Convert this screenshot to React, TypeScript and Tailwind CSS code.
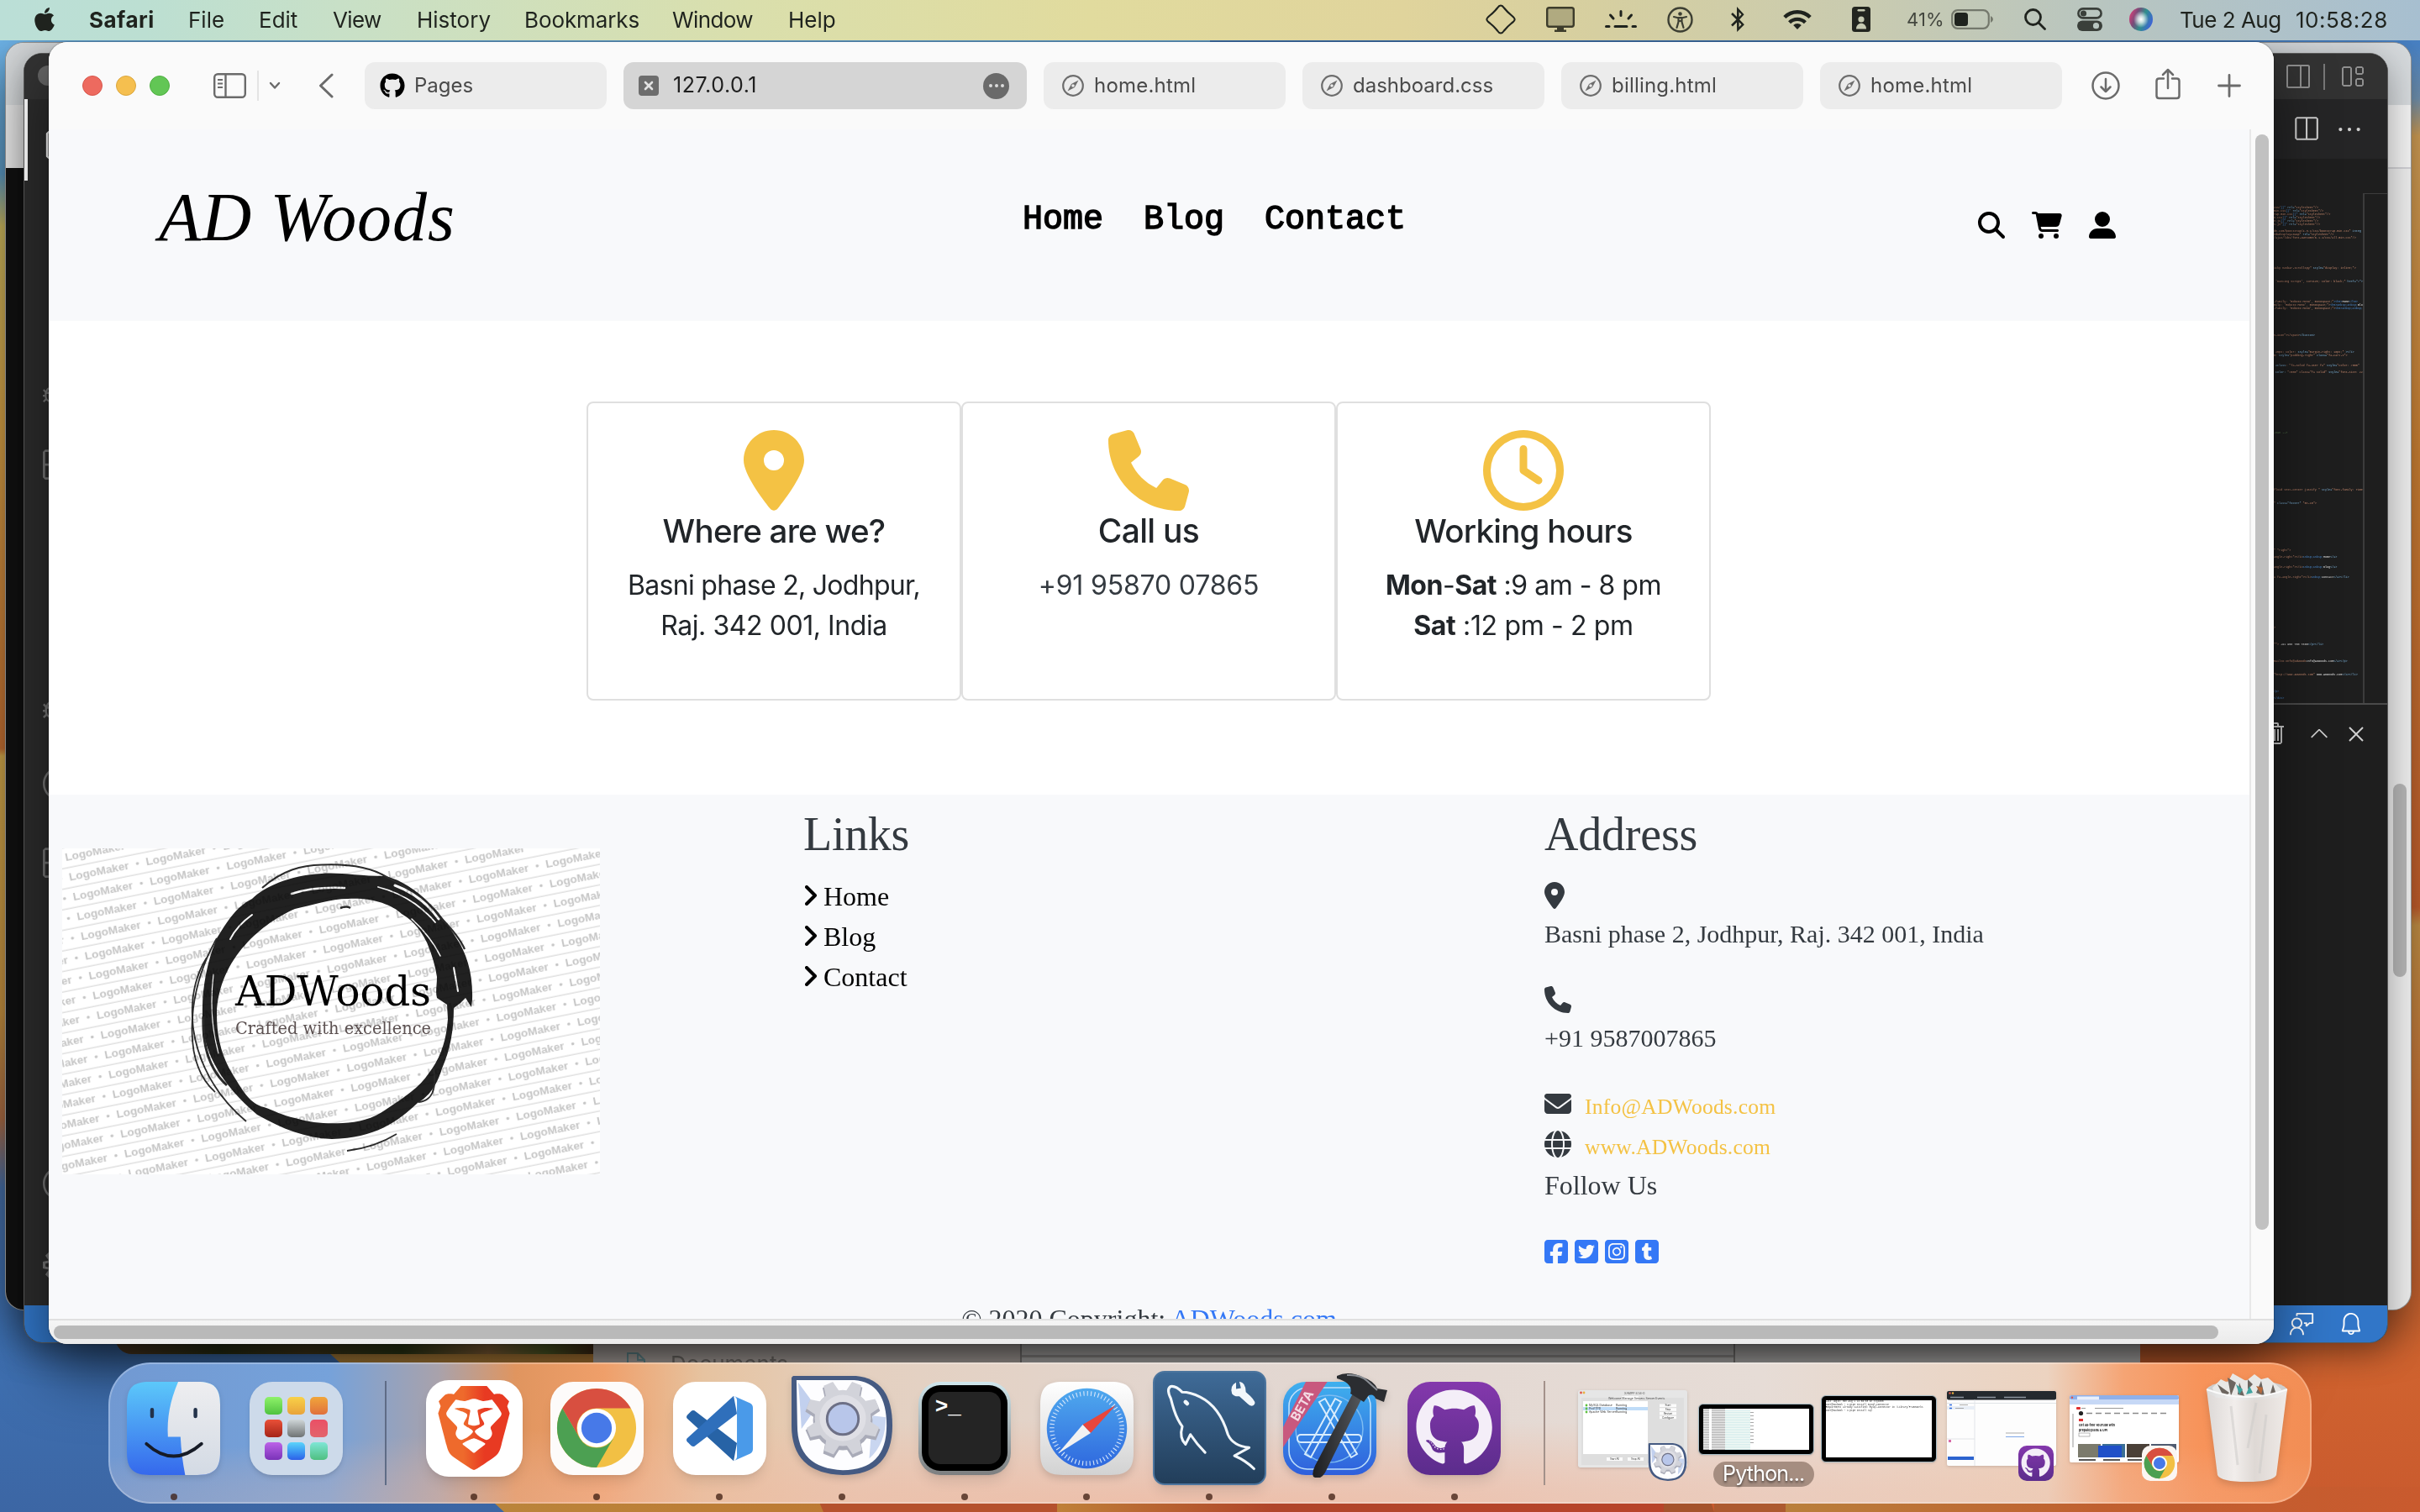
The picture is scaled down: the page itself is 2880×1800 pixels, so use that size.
import type { ReactNode } from "react";
import {
  FaBluetoothB,
  FaEnvelope,
  FaGithub,
  FaGlobe,
  FaCartShopping,
  FaLocationDot,
  FaMagnifyingGlass,
  FaPhone,
  FaRegClock,
  FaSquareFacebook,
  FaSquareInstagram,
  FaSquareTumblr,
  FaSquareTwitter,
  FaUserLarge,
  FaApple,
} from "react-icons/fa6";
import { SiBrave } from "react-icons/si";
import {
  VscBell,
  VscChevronUp,
  VscClose,
  VscAccount,
  VscDebugAlt,
  VscEllipsis,
  VscExtensions,
  VscFeedback,
  VscFiles,
  VscLayout,
  VscSettingsGear,
  VscSplitHorizontal,
  VscTrash,
} from "react-icons/vsc";

/* ---------- Wallpaper ---------- */

function Wallpaper() {
  return (
    <svg className="absolute inset-0 h-full w-full" viewBox="0 0 2880 1800" preserveAspectRatio="none">
      <defs>
        <linearGradient id="wl" x1="0" y1="0" x2="0" y2="1800" gradientUnits="userSpaceOnUse">
          <stop offset="0.03" stopColor="#6fb4e8" />
          <stop offset="0.115" stopColor="#609fcb" />
          <stop offset="0.15" stopColor="#d6c162" />
          <stop offset="0.28" stopColor="#dfa84a" />
          <stop offset="0.495" stopColor="#cd7535" />
          <stop offset="0.5" stopColor="#dbb050" />
          <stop offset="0.67" stopColor="#cf9844" />
          <stop offset="0.74" stopColor="#b07048" />
          <stop offset="0.785" stopColor="#4a74ad" />
          <stop offset="0.88" stopColor="#3f72b4" />
          <stop offset="1" stopColor="#3c66a4" />
        </linearGradient>
        <linearGradient id="wr" x1="0" y1="0" x2="0" y2="1800" gradientUnits="userSpaceOnUse">
          <stop offset="0.03" stopColor="#4a84c8" />
          <stop offset="0.065" stopColor="#7a9dbd" />
          <stop offset="0.09" stopColor="#e0aa5c" />
          <stop offset="0.3" stopColor="#da8a38" />
          <stop offset="0.6" stopColor="#cf6430" />
          <stop offset="0.612" stopColor="#d0994a" />
          <stop offset="0.75" stopColor="#d2753a" />
          <stop offset="0.9" stopColor="#d0632f" />
          <stop offset="1" stopColor="#c95a2e" />
        </linearGradient>
        <linearGradient id="wb1" x1="0" x2="1">
          <stop offset="0" stopColor="#b98a3e" />
          <stop offset="1" stopColor="#bd7a34" />
        </linearGradient>
        <linearGradient id="wb2" x1="0" x2="1">
          <stop offset="0" stopColor="#bf8038" />
          <stop offset="0.35" stopColor="#b0452a" />
          <stop offset="1" stopColor="#b8442a" />
        </linearGradient>
        <linearGradient id="wb3" x1="0" x2="1">
          <stop offset="0" stopColor="#b9803c" />
          <stop offset="0.5" stopColor="#c06030" />
          <stop offset="1" stopColor="#c95a2e" />
        </linearGradient>
      </defs>
      <rect width="1440" height="1800" fill="url(#wl)" />
      <rect x="1440" width="1440" height="1800" fill="url(#wr)" />
      <path d="M380 1600L600 1800H1000V1600Z" fill="url(#wb1)" />
      <path d="M967 1770L980 1800H1270V1770Z" fill="#b5512d" />
      <path d="M1258 1770V1800H1990V1770Z" fill="url(#wb2)" />
      <path d="M1980 1770H2030L2040 1800H1980Z" fill="#a5532c" />
      <path d="M2125 1770L2115 1800H2880V1770Z" fill="url(#wb3)" />
      <rect x="2040" y="1770" width="85" height="30" fill="#ad5a30" />
    </svg>
  );
}

/* ---------- Menu bar ---------- */

const MENUS: [string, string][] = [
  ["File", "w-[84px]"],
  ["Edit", "w-[88px]"],
  ["View", "w-[100px] tracking-[-0.6px]"],
  ["History", "w-[128px]"],
  ["Bookmarks", "w-[176px] tracking-[-0.1px]"],
  ["Window", "w-[138px] tracking-[-0.6px]"],
  ["Help", "w-[90px]"],
];

function MenuBar() {
  return (
    <header className="absolute inset-x-0 top-0 flex h-12 items-center bg-[linear-gradient(90deg,#bbdfd7_0%,#bcdfd2_6%,#c8e0c7_14%,#dadfac_31%,#e1db9e_45%,#e0d49c_58%,#d6cfa0_66%,#c9cbb0_77%,#b8c5c0_87%,#a7bfd0_100%)] pb-[2px] text-[26px] text-[#1f231e]">
      <FaApple className="ml-[39px] mr-[39px] h-[32px] w-[28px]" />
      <span className="w-[118px] font-bold tracking-[0.5px]">Safari</span>
      {MENUS.map(([t, c]) => (
        <span key={t} className={c}>
          {t}
        </span>
      ))}
      <div className="flex-1" />
      <svg className="mr-[36px] h-[36px] w-[36px]" viewBox="0 0 36 36" fill="none" stroke="currentColor" strokeWidth="2.2" strokeLinejoin="round">
        <path d="M18 1.5Q20 1.500 22 4.500Q26 9.500 31 13.500Q35 17 34.500 18Q35 19.500 31 22.500Q26 26.500 22 31.500Q20 34.500 18 34.500Q16 34.500 14 31.500Q10 26.500 5 22.500Q1 19.500 1.500 18Q1 17 5 13.500Q10 9.500 14 4.500Q16 1.500 18 1.500Z" />
      </svg>
      <svg className="mr-[36px] h-[30px] w-[34px]" viewBox="0 0 34 30">
        <rect x="1.200" y="1.200" width="31.600" height="22.600" rx="2.500" fill="#b0aa80" stroke="#3d3c2b" strokeWidth="2.400" />
        <path d="M13 24h8v3.500h3V30H10v-2.500h3Z" fill="#3d3c2b" />
      </svg>
      <svg className="mr-[36px] h-[22px] w-[38px]" viewBox="0 0 38 22" stroke="currentColor" strokeWidth="3" strokeLinecap="round">
        <path d="M19 1.500v5M6.500 6l3.500 4M31.500 6L28 10M1.500 19.500H5M12 19.500h14M33 19.500h3.500" />
      </svg>
      <svg className="mr-[42px] h-[31px] w-[31px]" viewBox="0 0 31 31" fill="none" stroke="#3d3f33">
        <circle cx="15.500" cy="15.500" r="14" strokeWidth="2.400" />
        <circle cx="15.500" cy="8.500" r="2.300" fill="#3d3f33" stroke="none" />
        <path d="M8 12l5 1.200h5L23 12M13.500 13v5L11.500 25M17.500 13v5L19.500 25M13.500 17h4" strokeWidth="2.200" strokeLinecap="round" />
      </svg>
      <FaBluetoothB className="mr-[43px] h-[30px] w-[22px]" />
      <svg className="mr-[48px] h-[26px] w-[34px]" viewBox="0 0 34 26" fill="none" stroke="currentColor" strokeWidth="4.400">
        <path d="M1.800 10.500a21.500 21.500 0 0 1 30.400 0M7.600 16.800a13.300 13.300 0 0 1 18.800 0" />
        <path d="M17 25l-4.800-5a6.800 6.800 0 0 1 9.600 0Z" fill="currentColor" stroke="none" />
      </svg>
      <svg className="mr-[43px] h-[30px] w-[22px]" viewBox="0 0 22 30">
        <rect width="22" height="30" rx="3.500" fill="#22251f" />
        <rect x="6.500" y="3" width="9" height="2.400" rx="1.200" fill="#c6cab2" />
        <circle cx="11" cy="15" r="3.600" fill="#c6cab2" />
        <path d="M5 26.500c0-9 12-9 12 0Z" fill="#c6cab2" />
      </svg>
      <span className="w-[53px] text-[22px] tracking-[0.100px] text-[#44473f]">41%</span>
      <svg className="mr-[37px] h-[24px] w-[50px]" viewBox="0 0 50 24">
        <rect x="1.200" y="1.200" width="43.600" height="21.600" rx="6.500" fill="none" stroke="#74786c" strokeWidth="2.200" />
        <rect x="4" y="4" width="16" height="16" rx="3.500" fill="#1f231e" />
        <path d="M47 8q3 1.500 3 4t-3 4Z" fill="#74786c" />
      </svg>
      <svg className="mr-[37px] h-[26px] w-[26px]" viewBox="0 0 26 26" fill="none" stroke="currentColor" strokeWidth="2.800" strokeLinecap="round">
        <circle cx="10.500" cy="10.500" r="9" />
        <path d="M17.500 17.500l7 7" />
      </svg>
      <svg className="mr-[32px] h-[28px] w-[30px]" viewBox="0 0 30 28" fill="none">
        <rect x="1.400" y="1.400" width="27.200" height="11" rx="5.500" stroke="#3a3f3a" strokeWidth="2.600" />
        <circle cx="7.500" cy="7" r="3.600" fill="#3a3f3a" />
        <rect x="0" y="15.500" width="30" height="12.500" rx="6.200" fill="#3a3f3a" />
        <circle cx="22.500" cy="21.700" r="3.600" fill="#b8c5c0" />
      </svg>
      <svg className="mr-[32px] h-[28px] w-[28px]" viewBox="0 0 28 28">
        <defs>
          <radialGradient id="siriGlow">
            <stop offset="0" stopColor="#fff" />
            <stop offset="0.4" stopColor="#fff" stopOpacity="0.700" />
            <stop offset="1" stopColor="#fff" stopOpacity="0" />
          </radialGradient>
          <linearGradient id="siri" x1="0" x2="1" y1="0.200" y2="0.600">
            <stop offset="0" stopColor="#e0407a" />
            <stop offset="0.300" stopColor="#7a4a78" />
            <stop offset="0.600" stopColor="#2f8f8c" />
            <stop offset="1" stopColor="#3f62d8" />
          </linearGradient>
        </defs>
        <circle cx="14" cy="14" r="14" fill="url(#siri)" />
        <ellipse cx="14" cy="14" rx="9" ry="10" fill="url(#siriGlow)" />
      </svg>
      <span className="w-[138px] tracking-[-0.500px]">Tue 2 Aug</span>
      <span className="w-[148px] tracking-[0.500px]">10:58:28</span>
    </header>
  );
}

/* ---------- Background windows ---------- */

function BackWindow() {
  return (
    <div className="absolute left-[6px] top-[50px] flex h-[1510px] w-[2864px] overflow-hidden rounded-[22px] border border-[#555]/60 bg-[#ebebeb] shadow-[0_24px_60px_rgba(0,0,0,0.450)]">
      <div className="w-[1400px]">
        <div className="h-[74px] bg-[#d3d6d8]" />
        <div className="h-[75px] bg-[#e3e3e3]" />
        <div className="h-full bg-[#111]" />
      </div>
      <div className="flex-1">
        <div className="h-[74px] bg-[#d5d9dc]" />
        <div className="h-[74px] bg-[#f1f1f1]" />
        <div className="h-[2px] bg-[#cfcfd3]" />
        <div className="flex justify-end pr-[5px] pt-[732px]">
          <div className="h-[230px] w-4 rounded-full bg-[#b4b4b4]" />
        </div>
      </div>
    </div>
  );
}

type Seg = [string, string];
const O = "text-[#c98a6e]";
const B = "text-[#7fb6de]";
const D = "text-[#4a8ad0]";
const W = "text-[#e0e0e0]";
const G = "text-[#5f8a52]";

const CODE: Record<number, Seg[]> = {
  0: [["css/", O], ["}}\"", D], [" rel=", B], ["\"stylesheet\"/>", O]],
  1: [["min.css", O], ["}}\"", D], [" rel=", B], ["\"stylesheet\"/>", O]],
  2: [["rap.min.css", O], ["}}\"", D], [" rel=", B], ["\"stylesheet\"/>", O]],
  3: [["n.css", O], ["}}\"", D], [" rel=", B], ["\"stylesheet\"/>", O]],
  4: [["e.js", O], ["}}\"", D], [" rel=", B], ["\"stylesheet\"/>", O]],
  5: [["s.js\"", O], ["}}\"", D], [" rel=", B], ["\"stylesheet\"/>", O]],
  7: [["dn.com/bootstrap/4.3.1/css/bootstrap.min.css\" ", O], ["integ", B]],
  8: [["ed&display=swap\" ", O], ["rel=", B], ["\"stylesheet\"/>", O]],
  9: [["/ajax/libs/font-awesome/6.1.1/css/all.min.css\"/>", O]],
  18: [["icky navbar-scrollspy\" ", O], ["style=", B], ["\"display: inline;\">", O]],
  22: [[" 'Dancing Script', cursive; color: black;\" ", O], ["href=\"#\">", B]],
  28: [["-family: 'Roboto Mono', monospace;\"", O], ["><h5>", D], ["Home", W], ["</h5>", D]],
  29: [["mily: 'Roboto Mono', monospace;\">", O], ["<h5>&nbsp;&nbsp;", D], ["Blog", W]],
  30: [["-family: 'Roboto Mono', monospace;\">", O], ["<h5>&nbsp;&nbsp;", D], ["C", W]],
  38: [["n-icon\"></span>", O], ["</button>", B]],
  43: [[" 25px; color: ", O], ["style=", B], ["\"margin-right: 18px;\" ", O], ["></i>", B]],
  44: [["m: ", O], ["style=", B], ["\"padding-right\" ", O], ["class=", B], ["\"fa-cart-x\">", O]],
  47: [[" 2", B], ["class", B], [": ", O], ["\"fa-solid fa-user fa\" ", O], ["style=", B], ["\"color: #000\"", O]],
  49: [[" color:", B], [" \"#000\" class=\"fa solid\" ", O], ["style=", B], ["\"font-size: 22\"", O]],
  67: [["-nav -->", G]],
  84: [["fluid text-center justify \" ", O], ["style=", B], ["\"font-family: Times\"", O]],
  88: [["\" ", O], ["class=\"footer\"", B], [" \"mt-10\">", O]],
  102: [["\" \"right\">", O]],
  104: [["angle-right\"></i>", O], ["&nbsp;&nbsp;", D], ["Home", W], ["</a>", B]],
  107: [["angle-right\"></i>", O], ["&nbsp;&nbsp;", D], ["Blog", W], ["</a>", B]],
  110: [["a fa-angle-right\"></i>", O], ["&nbsp;", D], ["Contact", W], ["</a></li>", B]],
  125: [[">", O]],
  130: [["\"\"> ", O], ["+91 958 700 7865", W], ["</p></li>", B]],
  135: [["mailto:Info@adwoods", O], ["Info@ADWoods.com", W], ["</a></p>", B]],
  139: [["\"http://www.ADWoods.com\" ", O], ["www.ADWoods.com", W], ["</a></li>", B]],
  144: [["/p>", D]],
  146: [["</div>", D]],
};

function Minimap() {
  return (
    <pre className="h-[607px] w-[156px] overflow-hidden border-r-2 border-[#3c3c3c] pl-[48px] pt-[15px] font-['Liberation_Mono'] text-[3.400px] leading-[4px]">
      {Array.from({ length: 148 }, (_, i) => (
        <div key={i} className="h-1">
          {(CODE[i] ?? []).map(([t, c], j) => (
            <span key={j} className={c}>
              {t}
            </span>
          ))}
        </div>
      ))}
    </pre>
  );
}

function CodeWindow() {
  return (
    <div className="absolute left-[28px] top-[63px] flex h-[1536px] w-[2814px] flex-col overflow-hidden rounded-[22px] border border-[#5a5a5a] bg-[#1e1e1e] shadow-[0_10px_40px_rgba(0,0,0,0.350)]">
      <div className="flex min-h-0 flex-1">
        <div className="flex w-24 flex-col bg-[#2c2c2c] text-[#757575]">
          <div className="h-[54px] bg-[#333] pl-[16px] pt-[14px]">
            <div className="h-6 w-6 rounded-full bg-[#666]" />
          </div>
          <div className="flex h-[97px] items-center border-l-4 border-white pl-[20px] text-white">
            <VscFiles className="size-[44px]" />
          </div>
          <div className="flex flex-col pl-[22px] pt-[228px]">
            <VscDebugAlt className="size-[36px]" />
            <VscExtensions className="mt-[48px] size-[44px]" />
            <VscDebugAlt className="mt-[244px] size-[40px]" />
            <VscAccount className="mt-[58px] size-[40px]" />
            <VscExtensions className="mt-[48px] size-[44px]" />
            <VscAccount className="mt-[344px] size-[40px]" />
            <VscSettingsGear className="mt-[57px] size-[40px]" />
          </div>
        </div>
        <div className="flex flex-1 flex-col">
          <div className="flex h-[54px] items-center justify-end gap-4 bg-[#323232] pr-[26px] text-[#8f8f8f]">
            <svg className="h-[28px] w-[28px]" viewBox="0 0 28 28" fill="none" stroke="currentColor" strokeWidth="2">
              <rect x="1" y="1" width="26" height="26" rx="1.500" />
              <path d="M17 1v26" />
            </svg>
            <div className="h-[31px] w-[2px] bg-[#777]" />
            <VscLayout className="size-[32px]" />
          </div>
          <div className="flex h-[71px] items-center justify-end gap-[18px] bg-[#252526] pr-[28px] text-[#cfcfcf]">
            <VscSplitHorizontal className="size-[34px]" />
            <VscEllipsis className="size-[34px]" />
          </div>
          <div className="flex h-[650px] items-end justify-end border-b-2 border-[#4a4a4a]">
            <Minimap />
            <div className="h-[607px] w-[27px] border-t border-[#3c3c3c]" />
          </div>
          <div className="flex items-center justify-end gap-[12px] pr-[21px] pt-[19px] text-[#cfcfcf]">
            <VscTrash className="mr-[8px] size-[32px]" />
            <VscChevronUp className="size-[32px]" />
            <VscClose className="size-[32px]" />
          </div>
        </div>
      </div>
      <div className="flex h-[44px] items-center justify-end gap-[28px] bg-[#3176c8] pr-[28px] text-white">
        <VscFeedback className="size-[30px]" />
        <VscBell className="size-[30px]" />
      </div>
    </div>
  );
}

function LowerWindows() {
  return (
    <>
      <div className="absolute left-[137px] top-[1400px] h-[212px] w-[569px] rounded-bl-[20px] bg-[linear-gradient(90deg,#5a4028,#2f3618_22%,#4c4020_40%,#34421a_60%,#9a7040_78%,#5c6a2c_90%,#4a3018)]" />
      <div className="absolute left-[706px] top-[1400px] flex h-[380px] w-[1841px] bg-[#c2c0be] pt-[200px] text-[26px] text-[#7d7873]">
        <div className="flex w-[510px] items-start gap-[30px] border-r-2 border-[#868381] bg-[#beb6b1] pl-[40px] pt-[10px]">
          <svg className="h-[30px] w-[22px]" viewBox="0 0 22 30" fill="none" stroke="#6f9aa0" strokeWidth="2">
            <path d="M1 1h12l8 8v20H1ZM13 1v8h8" />
          </svg>
          <span className="leading-[28px]">Documents</span>
        </div>
        <div className="w-[849px] border-r-2 border-[#868381] pt-[13px]">
          <div className="h-[3px] bg-[#9c9a98]" />
        </div>
      </div>
    </>
  );
}

/* ---------- Browser window ---------- */

function Compass() {
  return (
    <svg className="size-[26px]" viewBox="0 0 26 26" fill="none">
      <circle cx="13" cy="13" r="11.800" stroke="#6d6d6d" strokeWidth="2.200" />
      <path d="M19.500 6.500L15 15L6.500 19.500L11 11Z" fill="#6d6d6d" />
      <circle cx="13" cy="13" r="1.800" fill="#ececec" />
    </svg>
  );
}

function Tab({ title, className }: { title: string; className: string }) {
  return (
    <div className="flex h-14 w-[288px] items-center gap-3 rounded-xl bg-[#ececec] pl-[22px] text-[#4a4a4a]">
      <Compass />
      <span className={className}>{title}</span>
    </div>
  );
}

function Toolbar() {
  return (
    <div className="flex h-[104px] shrink-0 items-center bg-[#fafafa] text-[24px] text-[#6b6b6b]">
      <div className="ml-[40px] flex gap-4">
        <div className="size-6 rounded-full border border-[#d8564b] bg-[#ed6a5f]" />
        <div className="size-6 rounded-full border border-[#dba63c] bg-[#f5bf4f]" />
        <div className="size-6 rounded-full border border-[#4faf42] bg-[#62c655]" />
      </div>
      <svg className="ml-[52px] h-[30px] w-[39px]" viewBox="0 0 39 30" fill="none" stroke="currentColor" strokeWidth="2.400">
        <rect x="1.200" y="1.200" width="36.600" height="27.600" rx="4" />
        <path d="M14.500 1v28" />
        <path d="M5 8h6M5 12.500h6M5 17h6" strokeWidth="2" />
      </svg>
      <div className="ml-[13px] h-9 w-[2px] bg-[#e4e4e4]" />
      <svg className="ml-[11px] h-[10px] w-[16px]" viewBox="0 0 16 10" fill="none" stroke="currentColor" strokeWidth="2.400" strokeLinecap="round" strokeLinejoin="round">
        <path d="M3 2l5 5.500l5-5.500" />
      </svg>
      <svg className="ml-[44px] h-[30px] w-[18px]" viewBox="0 0 18 30" fill="none" stroke="currentColor" strokeWidth="3" strokeLinecap="round" strokeLinejoin="round">
        <path d="M16 2L2.500 15L16 28" />
      </svg>
      <div className="ml-[37px] flex gap-5">
        <div className="flex h-14 w-[288px] items-center gap-[11px] rounded-xl bg-[#ececec] pl-[18px] text-[#4a4a4a]">
          <FaGithub className="size-[30px] text-black" />
          <span>Pages</span>
        </div>
        <div className="flex h-14 w-[480px] items-center rounded-xl bg-[#d5d5d5] pl-[18px] pr-[21px] text-[#1f1f1f]">
          <div className="mr-[17px] flex size-6 items-center justify-center rounded-[4px] bg-[#6d6d6d]">
            <svg className="size-[12px]" viewBox="0 0 12 12" stroke="#e2e2e2" strokeWidth="2.600" strokeLinecap="round">
              <path d="M2 2l8 8M10 2l-8 8" />
            </svg>
          </div>
          <span className="flex-1 text-[25px] tracking-[0.550px]">127.0.0.1</span>
          <div className="flex size-[31px] items-center justify-center gap-[3px] rounded-full bg-[#6a6a6a]">
            <span className="size-[4px] rounded-full bg-[#dcdcdc]" />
            <span className="size-[4px] rounded-full bg-[#dcdcdc]" />
            <span className="size-[4px] rounded-full bg-[#dcdcdc]" />
          </div>
        </div>
        <Tab title="home.html" className="tracking-[0.200px]" />
        <Tab title="dashboard.css" className="tracking-[0px]" />
        <Tab title="billing.html" className="tracking-[0.200px]" />
        <Tab title="home.html" className="tracking-[0.200px]" />
      </div>
      <svg className="ml-[35px] size-[34px]" viewBox="0 0 34 34" fill="none" stroke="currentColor" strokeWidth="2.500" strokeLinecap="round" strokeLinejoin="round">
        <circle cx="17" cy="17" r="15.500" />
        <path d="M17 9v15M11.500 18.500L17 24l5.500-5.500" />
      </svg>
      <svg className="-mt-[5px] ml-[42px] h-[38px] w-[30px]" viewBox="0 0 30 38" fill="none" stroke="currentColor" strokeWidth="2.500" strokeLinecap="round" strokeLinejoin="round">
        <path d="M10 12.500H4.500Q1.500 12.500 1.500 15.500V33Q1.500 36 4.500 36H25.500Q28.500 36 28.500 33V15.500Q28.500 12.500 25.500 12.500H20M15 24V2M9 8L15 2L21 8" />
      </svg>
      <svg className="ml-[44px] size-[28px]" viewBox="0 0 28 28" stroke="currentColor" strokeWidth="2.800" strokeLinecap="round">
        <path d="M14 1.500v25M1.500 14h25" />
      </svg>
    </div>
  );
}

function SiteHeader() {
  return (
    <div className="flex h-[228px] shrink-0 items-start bg-[#f8f9fb] pl-[131px] text-black">
      <div className="mt-[60px] w-[1028px] font-['Liberation_Serif'] text-[82px] italic leading-[90px] tracking-[0.900px]">AD Woods</div>
      <nav className="mt-[84px] flex w-[1137px] gap-12 font-['Liberation_Mono'] text-[40px] leading-[48px] [-webkit-text-stroke:1.500px_black]">
        <span>Home</span>
        <span>Blog</span>
        <span>Contact</span>
      </nav>
      <div className="mt-[98px] flex gap-8">
        <FaMagnifyingGlass className="size-8" />
        <FaCartShopping className="h-8 w-9" />
        <FaUserLarge className="size-8" />
      </div>
    </div>
  );
}

function InfoCard({ icon, title, titleClass, children }: { icon: ReactNode; title: string; titleClass: string; children: ReactNode }) {
  return (
    <div className="flex h-[356px] w-[446px] flex-col items-center rounded-lg border-2 border-[#dfdfdf] bg-white pt-8 text-[#212529]">
      <div className="h-24 pr-px text-[96px] text-[#f4c244]">{icon}</div>
      <h5 className={titleClass}>{title}</h5>
      <div className="mt-[17px] whitespace-pre text-center text-[32px] leading-[48px]">{children}</div>
    </div>
  );
}

function Brand() {
  return (
    <svg className="mt-[51px] h-[388px] w-[640px] bg-white" viewBox="0 0 640 388">
      <defs>
        <pattern id="wm" width="93.200" height="24" patternUnits="userSpaceOnUse" patternTransform="translate(5.700 22) rotate(-11.300)">
          <text x="0" y="17" fontFamily="Liberation Sans" fontWeight="700" fontSize="13.600" fill="#c6c6c6">
            LogoMaker
          </text>
          <circle cx="83" cy="12.500" r="1.800" fill="#c6c6c6" />
          <path d="M0 1.200H93.200" stroke="#e0e0e0" strokeWidth="1.600" />
        </pattern>
      </defs>
      <g fill="#212121">
        <path
          fillRule="evenodd"
          d="M309 30C330 28 350 33 385 33C420 42 450 75 468 105C482 125 489 150 488 180L487 189L480 178L474 184L466 190C466 215 462 240 452 262C446 282 436 296 423 303C400 325 372 345 321 346C290 345 262 334 232 317C190 282 165 240 167 197C166 165 174 130 184 107C196 88 206 70 226 60C240 46 270 32 309 30ZM340 60C320 60 296 68 277 72C240 88 186 130 184 197C184 225 190 250 206 274C216 290 224 304 240 308C252 312 262 318 277 321C297 327 315 328 334 327C352 326 370 322 385 311C406 297 426 284 436 268C450 250 457 230 459 203L458 186L446 178C444 170 446 164 446 153C444 140 440 126 434 112C424 92 414 84 404 78C392 66 366 58 340 60Z"
        />
      </g>
      <g fill="none" stroke="#2c2c2c" strokeWidth="1.800">
        <path d="M238 47C262 26 285 20 309 19.500C345 18 370 24 386 34C415 48 440 66 450 82C466 98 474 108 479 120" strokeWidth="2.200" />
        <path d="M184 107Q162 145 156 190Q148 260 182 290" />
        <path d="M172 130Q150 165 156 215Q166 280 219 325" />
        <path d="M168 200Q166 255 196 282" strokeWidth="3" />
        <path d="M339 360Q372 356 398 340" />
        <path d="M331 71q8-3 12 0" strokeWidth="2.500" />
        <path d="M424 302Q448 300 442 262" />
      </g>
      <g fill="none" stroke="#fafafa" strokeLinecap="round">
        <path d="M273 54Q300 45 336 47" strokeWidth="2.500" />
        <path d="M376 46Q400 52 420 66Q436 78 444 88" strokeWidth="1.800" />
        <path d="M396 44Q428 56 448 84" strokeWidth="3" />
        <path d="M416 84Q438 104 450 128" strokeWidth="1.500" />
        <path d="M200 108Q208 92 226 79" strokeWidth="2" />
        <path d="M466 142L471 170" strokeWidth="2" />
        <path d="M180 150Q174 200 186 244" strokeWidth="1.200" />
      </g>
      <rect width="640" height="388" fill="url(#wm)" className="mix-blend-multiply" />
      <text x="206" y="187" fontFamily="DejaVu Serif" fontSize="49" textLength="233" lengthAdjust="spacingAndGlyphs" fill="#000">
        ADWoods
      </text>
      <text x="206" y="221" fontFamily="DejaVu Serif" fontSize="21" textLength="233" lengthAdjust="spacingAndGlyphs" fill="#5c5151">
        Crafted with excellence
      </text>
    </svg>
  );
}

function Footer() {
  return (
    <div className="relative h-[624px] shrink-0 overflow-hidden bg-[#f8f9fb] font-['Liberation_Serif'] text-[#343a40]">
      <div className="flex h-[600px] items-start pl-4 pt-[13px]">
        <div className="w-[882px]">
          <Brand />
        </div>
        <div className="w-[882px]">
          <h3 className="text-[56px] leading-[68px] tracking-[-0.300px]">Links</h3>
          <ul className="mt-4 text-[32px] leading-[48px] text-black">
            {["Home", "Blog", "Contact"].map((t) => (
              <li key={t} className="flex gap-2 pl-[2px]">
                <svg className="mt-[11px] h-6 w-[14px]" viewBox="0 0 14 24" fill="none" stroke="currentColor" strokeWidth="4" strokeLinecap="round" strokeLinejoin="round">
                  <path d="M2 2L12 12L2 22" />
                </svg>
                {t}
              </li>
            ))}
          </ul>
        </div>
        <div>
          <h3 className="text-[56px] leading-[68px] tracking-[-0.200px]">Address</h3>
          <FaLocationDot className="mt-[23px] h-8 w-6" />
          <p className="mt-[6px] text-[30px] leading-[48px]">Basni phase 2, Jodhpur, Raj. 342 001, India</p>
          <FaPhone className="mt-[38px] size-8" />
          <p className="mt-[6px] text-[30px] leading-[48px]">+91 9587007865</p>
          <div className="mt-[38px] flex h-8 gap-4">
            <FaEnvelope className="size-8" />
            <span className="mt-[4px] text-[25.600px] leading-8 tracking-[0.200px] text-[#f4c244]">Info@ADWoods.com</span>
          </div>
          <div className="mt-4 flex h-8 gap-4">
            <FaGlobe className="size-8" />
            <span className="mt-[4px] text-[25.600px] leading-8 tracking-[0.200px] text-[#f4c244]">www.ADWoods.com</span>
          </div>
          <p className="mt-[9px] text-[32px] leading-[48px]">Follow Us</p>
          <div className="mt-[39px] flex gap-2 text-[#3478f6]">
            <FaSquareFacebook className="h-8 w-7" />
            <FaSquareTwitter className="h-8 w-7" />
            <FaSquareInstagram className="h-8 w-7" />
            <FaSquareTumblr className="h-8 w-7" />
          </div>
        </div>
      </div>
      <p className="text-center text-[32px] leading-[48px]">
        © 2020 Copyright: <a className="text-[#3478f6]">ADWoods.com</a>
      </p>
    </div>
  );
}

function Browser() {
  return (
    <main className="absolute left-[58px] top-[50px] flex h-[1550px] w-[2648px] flex-col overflow-hidden rounded-[22px] bg-[#fafafa] shadow-[0_0_2px_rgba(0,0,0,0.600),0_36px_70px_rgba(0,0,0,0.500)]">
      <Toolbar />
      <div className="flex h-[1416px]">
        <div className="flex w-[2619px] flex-col bg-white">
          <SiteHeader />
          <div className="flex h-[564px] shrink-0 items-start pl-[640px] pt-24">
            <InfoCard icon={<FaLocationDot className="h-24 w-[72px]" />} title="Where are we?" titleClass="text-[38.500px] font-medium leading-[48px] tracking-[-0.750px]">
              <p className="tracking-[-0.700px]">Basni phase 2, Jodhpur,</p>
              <p className="tracking-[-0.430px]">Raj. 342 001, India</p>
            </InfoCard>
            <InfoCard icon={<FaPhone className="size-24" />} title="Call us" titleClass="text-[39px] font-medium leading-[48px] tracking-[-0.700px]">
              <p className="tracking-[-0.180px] text-[#343a40]">+91 95870 07865</p>
            </InfoCard>
            <InfoCard icon={<FaRegClock className="size-24" />} title="Working hours" titleClass="text-[38.500px] font-medium leading-[48px] tracking-[-0.750px]">
              <p className="tracking-[-0.480px]">
                <b>Mon</b>-<b>Sat</b> :9 am - 8 pm
              </p>
              <p className="tracking-[-0.350px]">
                <b>Sat</b> :12 pm - 2 pm
              </p>
            </InfoCard>
          </div>
          <Footer />
        </div>
        <div className="flex w-[29px] justify-center border-l-2 border-[#e8e8e8] pr-[2px] pt-[6px]">
          <div className="h-[1304px] w-4 rounded-full bg-[#c1c1c1]" />
        </div>
      </div>
      <div className="flex-1 border-t-2 border-[#e0e0e0] bg-gradient-to-b from-[#f5f5f5] to-[#ebebeb] pl-[6px] pt-[6px]">
        <div className="h-4 w-[2576px] rounded-full bg-[#b9b9b9]" />
      </div>
    </main>
  );
}

/* ---------- Dock ---------- */

const TILE = "M49 0H151C187 0 200 13 200 49V151C200 187 187 200 151 200H49C13 200 0 187 0 151V49C0 13 13 0 49 0Z";

function Finder() {
  return (
    <svg className="size-[111px] drop-shadow-md" viewBox="0 0 200 200">
      <defs>
        <linearGradient id="fb" x1="0" y1="0" x2="0" y2="1">
          <stop offset="0" stopColor="#5cc8fa" />
          <stop offset="1" stopColor="#3568ec" />
        </linearGradient>
        <linearGradient id="fw" x1="0" y1="0" x2="0" y2="1">
          <stop offset="0" stopColor="#eeeef0" />
          <stop offset="1" stopColor="#d3dae4" />
        </linearGradient>
      </defs>
      <path d={TILE} fill="url(#fb)" />
      <path d="M110 0H151C187 0 200 13 200 49V151C200 187 187 200 151 200H125Q117 160 115 118H88Q84 60 110 0Z" fill="url(#fw)" />
      <path d="M54 60v14M147 60v14" stroke="#23324a" strokeWidth="8" strokeLinecap="round" />
      <path d="M42 133Q100 186 160 133" fill="none" stroke="#161b26" strokeWidth="7" strokeLinecap="round" />
    </svg>
  );
}

const PADS = [
  "bg-gradient-to-b from-[#8ef26a] to-[#4fc23f]",
  "bg-gradient-to-b from-[#f8d148] to-[#e8a33c]",
  "bg-gradient-to-b from-[#f0a53a] to-[#e0703c]",
  "bg-gradient-to-b from-[#ea5038] to-[#a52318]",
  "bg-gradient-to-b from-[#cfd6d8] to-[#6f7374]",
  "bg-gradient-to-b from-[#ea4f66] to-[#e2646c]",
  "bg-gradient-to-b from-[#bc62e8] to-[#7a32b8]",
  "bg-gradient-to-b from-[#5cd4fa] to-[#2f5fe8]",
  "bg-gradient-to-b from-[#7fe6d6] to-[#4fbf80]",
];

function Launchpad() {
  return (
    <div className="grid size-[111px] grid-cols-[21px_21px_21px] place-content-center gap-[6px] rounded-[27px] bg-[#cddaea] shadow-md">
      {PADS.map((c) => (
        <div key={c} className={`size-[21px] rounded-[5px] ${c}`} />
      ))}
    </div>
  );
}

function Brave() {
  return (
    <div className="flex size-[115px] items-center justify-center rounded-[27px] bg-white shadow-lg">
      <svg width="0" height="0" className="absolute">
        <linearGradient id="brv" x1="0" x2="1">
          <stop offset="0.350" stopColor="#ee6a2c" />
          <stop offset="0.650" stopColor="#e83a22" />
        </linearGradient>
      </svg>
      <SiBrave className="h-[104px] w-[100px]" style={{ fill: "url(#brv)" }} />
    </div>
  );
}

function ChromeDisc({ className }: { className: string }) {
  return (
    <svg className={className} viewBox="-50 -50 100 100">
      <circle r="48" fill="#f2c044" />
      <path d="M-41.600-24A48 48 0 0 1 41.600-24H0A24 24 0 0 0-20.800 12Z" fill="#d84f40" />
      <path d="M-41.600-24A48 48 0 0 0 0 48L20.800 12A24 24 0 0 1-20.800 12Z" fill="#4ca052" />
      <circle r="23.500" fill="#fff" />
      <circle r="18.500" fill="#4779e8" />
    </svg>
  );
}

function VsCode() {
  return (
    <div className="flex size-[111px] items-center justify-center rounded-[27px] bg-white shadow-lg">
      <svg className="size-[79px]" viewBox="0 0 100 100">
        <path d="M71 99L76 72L12 23Q9 22 7 24L1 30Q-1 33 1 35Z" fill="#2763a6" />
        <path d="M71 1L76 28L12 77Q9 78 7 76L1 70Q-1 67 1 65Z" fill="#2f6fbb" />
        <path d="M71 1L96 12Q100 14 100 19V81Q100 86 96 88L71 99Q76 97 76 92V8Q76 3 71 1Z" fill="#4a9ae9" />
      </svg>
    </div>
  );
}

function GearTile({ className }: { className: string }) {
  const teeth = [0, 45, 90, 135, 180, 225, 270, 315];
  return (
    <svg className={className} viewBox="0 0 126 124">
      <path d="M4 2H80Q124 6 124 62Q124 122 64 122Q2 120 2 62V4Z" fill="#455a82" />
      <path d="M8 7H78Q117 10 117 62Q117 116 64 116Q9 114 9 62Z" fill="#fdfdff" />
      <path d="M10 10L32 40L14 66Q12 30 10 10Z" fill="#c2d0ee" />
      <path d="M100 50L116 52Q116 84 96 102Z" fill="#c9d6f0" />
      <g fill="#a9abb8" transform="translate(64 56)">
        {teeth.map((a) => (
          <path key={a} d="M-10-30L-7-46H7L10-30Z" transform={`rotate(${a + 22})`} />
        ))}
        <circle r="36" />
      </g>
      <g fill="#d2d3da" transform="translate(64 53)">
        {teeth.map((a) => (
          <path key={a} d="M-9-30L-6-45H6L9-30Z" transform={`rotate(${a + 22})`} />
        ))}
        <circle r="34" />
      </g>
      <circle cx="64" cy="53" r="28" fill="#dfdfe5" />
      <circle cx="64" cy="54" r="19" fill="#b8c6ea" stroke="#6d7086" strokeWidth="3" />
    </svg>
  );
}

function TerminalIcon() {
  return (
    <div className="flex h-[111px] w-[110px] items-center justify-center rounded-[26px] bg-gradient-to-b from-[#cfe6ec] to-[#7d7f80] shadow-lg">
      <div className="size-[102px] rounded-[22px] bg-black p-[8px]">
        <div className="h-full w-full rounded-[14px] bg-[#242424] pl-[8px] pt-[4px] font-['Liberation_Mono'] text-[26px] font-bold leading-[28px] text-white">&gt;_</div>
      </div>
    </div>
  );
}

function SafariIcon() {
  return (
    <svg className="size-[111px] drop-shadow-lg" viewBox="0 0 200 200">
      <defs>
        <linearGradient id="sw" x1="0" y1="0" x2="0" y2="1">
          <stop offset="0" stopColor="#fff" />
          <stop offset="1" stopColor="#d2d2d2" />
        </linearGradient>
        <linearGradient id="sb" x1="0" y1="0" x2="0" y2="1">
          <stop offset="0" stopColor="#4fa9ee" />
          <stop offset="1" stopColor="#2f68de" />
        </linearGradient>
      </defs>
      <path d={TILE} fill="url(#sw)" />
      <circle cx="100" cy="100" r="86" fill="url(#sb)" />
      <circle cx="100" cy="100" r="75" fill="none" stroke="#d6e6fa" strokeWidth="10" strokeDasharray="2 5.850" />
      <path d="M162 50L108 110L91 92Z" fill="#e8463c" />
      <path d="M38 154L91 92L108 110Z" fill="#f2f2f2" />
    </svg>
  );
}

function MysqlIcon() {
  return (
    <div className="-mt-[1px] flex h-[136px] w-[135px] rounded-[14px] border-2 border-[#4c759e] bg-gradient-to-b from-[#3f6b98] to-[#223e5a] shadow-lg">
      <svg className="h-full w-full" viewBox="0 0 135 136" fill="none" stroke="#f2f7fb" strokeWidth="3.200" strokeLinejoin="round" strokeLinecap="round">
        <path d="M122 118Q112 108 98 102L116 92Q96 90 90 76Q80 42 56 30Q44 24 34 24Q26 16 20 17Q14 20 20 32Q22 40 24 46Q28 58 34 66Q30 80 38 88L44 76Q52 88 62 98" />
        <path d="M38 36l2 2" strokeWidth="5" />
        <path d="M100 12Q92 16 95 26Q98 30 104 29L114 38Q120 44 123 38Q124 34 112 24Q112 12 104 11L106 19L100 20Z" fill="#f2f7fb" stroke="none" />
      </svg>
    </div>
  );
}

function XcodeIcon() {
  return (
    <svg className="-mt-[10px] h-[128px] w-[132px] drop-shadow-lg" viewBox="0 0 132 128">
      <defs>
        <linearGradient id="xb" x1="0" y1="0" x2="0" y2="1">
          <stop offset="0" stopColor="#3fb0ee" />
          <stop offset="1" stopColor="#2f5fdc" />
        </linearGradient>
        <linearGradient id="hm" x1="0" y1="0" x2="1" y2="0">
          <stop offset="0" stopColor="#1c1d20" />
          <stop offset="1" stopColor="#55585d" />
        </linearGradient>
        <clipPath id="xc">
          <rect x="8" y="14" width="111" height="111" rx="27" />
        </clipPath>
      </defs>
      <g clipPath="url(#xc)">
        <rect x="8" y="14" width="111" height="111" fill="url(#xb)" />
        <rect x="15" y="21" width="97" height="97" rx="22" fill="none" stroke="#bfe0fa" strokeWidth="1.600" />
        <circle cx="63" cy="70" r="40" fill="none" stroke="#7dbcf2" strokeWidth="1.500" />
        <g fill="none" stroke="#d8ecfc" strokeWidth="2">
          <path d="M58 34l38 66l-7 4l-38-66ZM70 34L34 100l7 4L77 38Z" />
          <rect x="25" y="77" width="76" height="9" rx="4" />
        </g>
        <path d="M8 68L36 12H62L8 92Z" fill="#c8587e" />
      </g>
      <text transform="translate(30 42) rotate(-60)" fontFamily="Inter" fontWeight="700" fontSize="15" fill="#f4dbe4" textAnchor="middle" x="0" y="6">
        BETA
      </text>
      <path d="M92 26L103 31L58 122Q52 132 44 127Q42 122 46 114Z" fill="url(#hm)" />
      <path d="M72 7Q86 0 104 9Q116 13 120 22L132 24L128 38L118 34Q116 28 110 30L104 38L88 28Q92 16 72 10Z" fill="#2b2d31" />
      <path d="M84 6Q100 5 108 13L120 24" fill="none" stroke="#8b8f96" strokeWidth="2" />
    </svg>
  );
}

function GithubTile({ className }: { className: string }) {
  return (
    <div className={`flex items-center justify-center bg-gradient-to-b from-[#8438ac] to-[#5b2c8c] text-[#f4eef8] ${className}`}>
      <FaGithub className="size-[84%]" />
    </div>
  );
}

function MiniControl() {
  return (
    <svg className="h-[92px] w-[130px] drop-shadow" viewBox="0 0 130 92">
      <rect width="130" height="92" rx="3" fill="#e6e6e6" />
      <circle cx="3.500" cy="3" r="1.400" fill="#e05548" />
      <circle cx="7" cy="3" r="1.400" fill="#eab040" />
      <text x="55" y="4.500" fontSize="3.500" fontFamily="Inter" fill="#555">XAMPP 8.1.6-0</text>
      <rect x="4" y="9" width="122" height="80" fill="#dedede" />
      <rect x="52" y="7" width="20" height="4.500" fill="#fafafa" />
      <text x="36" y="10.500" fontSize="3.500" fontFamily="Inter" fill="#444">Welcome   Manage Servers   Server Events</text>
      <rect x="6" y="13" width="77" height="63" fill="#fff" />
      <rect x="6" y="20" width="77" height="4" fill="#bfdcf8" />
      {["MySQL Database", "ProFTPD", "Apache Web Server"].map((t, i) => (
        <g key={t}>
          <circle cx="10" cy={18 + i * 4} r="1.400" fill="#5fc040" />
          <text x="13" y={19.300 + i * 4} fontSize="3.400" fontFamily="Inter" fill="#333">{t}</text>
          <text x="45" y={19.300 + i * 4} fontSize="3.400" fontFamily="Inter" fill="#333">Running</text>
        </g>
      ))}
      {["Start", "Stop", "Restart", "Configure"].map((t, i) => (
        <g key={t}>
          <rect x="97" y={16.500 + i * 4.700} width="20" height="3.600" fill="#fbfbfb" />
          <text x="107" y={19.400 + i * 4.700} fontSize="3" textAnchor="middle" fontFamily="Inter" fill="#333">{t}</text>
        </g>
      ))}
      <rect x="34" y="80" width="19" height="4" fill="#fbfbfb" />
      <rect x="59" y="80" width="19" height="4" fill="#fbfbfb" />
      <text x="43.500" y="83.200" fontSize="3" textAnchor="middle" fontFamily="Inter" fill="#333">Start All</text>
      <text x="68.500" y="83.200" fontSize="3" textAnchor="middle" fontFamily="Inter" fill="#333">Stop All</text>
    </svg>
  );
}

function MiniShell({ filled }: { filled?: boolean }) {
  return (
    <div className={`w-[138px] rounded-[6px] border-[1.500px] border-[#a8bcc4] bg-black p-[5px] shadow ${filled ? "h-[61px]" : "h-[80px]"}`}>
      <div className="flex h-full w-full overflow-hidden bg-white">
        {filled ? (
          <>
            <div className="mr-[3px] w-[7px] bg-[repeating-linear-gradient(180deg,#b4b4b4_0_1px,#eee_1px_2px)]" />
            <div className="w-[16px] bg-[repeating-linear-gradient(180deg,#b4b4b4_0_1px,#ececec_1px_2px)]" />
            <div className="mt-[2px] w-[30px] bg-[repeating-linear-gradient(180deg,#d4ecec_0_1px,#f4faf6_1px_2px)]" />
            <div className="mt-[4px] h-[40px] w-[4px] bg-[repeating-linear-gradient(180deg,#a8a8a8_0_1px,#fff_1px_4px)]" />
          </>
        ) : (
          <div className="font-['Liberation_Mono'] text-[2.800px] leading-[3.700px] text-[#333]">
            <p className="whitespace-nowrap">Last login: Mon Aug 1 22:56:03 on ttys000</p>
            <p className="whitespace-nowrap">user@Macbook ~ % pip3 install mysql-connector</p>
            <p className="whitespace-nowrap">Requirement already satisfied: mysql-connector in /Library/Frameworks</p>
            <p className="whitespace-nowrap">user@Macbook ~ % pip3 install sql</p>
          </div>
        )}
      </div>
    </div>
  );
}

function MiniGit() {
  return (
    <svg className="h-[89px] w-[130px] drop-shadow" viewBox="0 0 130 89">
      <rect width="130" height="89" rx="2" fill="#fdfdfd" />
      <rect width="130" height="10.500" rx="2" fill="#24292e" />
      <circle cx="3.500" cy="2.500" r="1.200" fill="#e05548" />
      <circle cx="7" cy="2.500" r="1.200" fill="#eab040" />
      <path d="M4 7.500h16M36 7.500h22M68 7.500h26" stroke="#8b949e" strokeWidth="1.500" />
      <path d="M0 14.500h130M33 10.500V89M0 57h33" stroke="#e1e4e8" />
      <rect x="0" y="18" width="33" height="4" fill="#e8eef6" />
      <path d="M3 16.500h3M3 20.500h3" stroke="#2f6be0" strokeWidth="1.600" />
      <path d="M15 16.500h10M10 20.500h10M70 50h22" stroke="#aaa" />
      <path d="M70 54.500h22" stroke="#7fa8ea" />
      <rect x="2" y="58" width="3" height="3" fill="#d86aa8" />
      <rect x="1" y="78" width="31" height="4" fill="#2c63cf" />
    </svg>
  );
}

function MiniTube() {
  return (
    <svg className="h-[80px] w-[130px] drop-shadow" viewBox="0 0 130 80">
      <rect width="130" height="80" rx="2" fill="#fff" />
      <rect width="130" height="5.500" rx="2" fill="#8fb0ea" />
      <rect x="9" y="1.500" width="26" height="4" fill="#e9f0fc" />
      <circle cx="3" cy="2.700" r="1.200" fill="#e05548" />
      <rect y="5.500" width="130" height="5.500" fill="#c6d8f6" />
      <rect x="8" y="14" width="5" height="3" rx="1" fill="#e03030" />
      <path d="M14 15.500h5M30 15.500h34M4 22v40" stroke="#999" />
      <circle cx="13.500" cy="21.500" r="2.600" fill="#222" />
      <path d="M20 21.500h98" stroke="#8a8a8a" strokeWidth="1.600" strokeDasharray="7 4" />
      <rect x="11" y="28" width="5" height="3" fill="#e03030" />
      <text x="11" y="37" fontSize="4" fontWeight="700" fontFamily="Inter" fill="#222" textLength="43" lengthAdjust="spacingAndGlyphs">Get ad-free YouTube with</text>
      <text x="11" y="42.500" fontSize="4" fontWeight="700" fontFamily="Inter" fill="#222" textLength="34" lengthAdjust="spacingAndGlyphs">prepaid plans &amp; UPI</text>
      <rect x="11" y="45" width="13" height="4" fill="none" stroke="#888" strokeWidth="0.600" />
      <rect x="10" y="58" width="27" height="16" fill="#7b7a6c" />
      <rect x="39" y="58" width="27" height="16" fill="#3b6f96" />
      <rect x="68" y="58" width="27" height="16" fill="#4a4038" />
      <rect x="97" y="58" width="30" height="16" fill="#4f5b70" />
      <rect x="34" y="60" width="28" height="14" fill="#2050c8" />
      <path d="M11 77h20M40 77h20M69 77h20" stroke="#555" strokeWidth="2" />
    </svg>
  );
}

function Trash() {
  return (
    <svg className="h-[130px] w-[98px] drop-shadow-lg" viewBox="0 0 98 130">
      <defs>
        <linearGradient id="tr" x1="0" x2="1">
          <stop offset="0" stopColor="#dcdcdc" />
          <stop offset="0.350" stopColor="#f2f2f2" />
          <stop offset="0.600" stopColor="#dedcda" />
          <stop offset="1" stopColor="#f0efee" />
        </linearGradient>
      </defs>
      <ellipse cx="49" cy="21" rx="48" ry="12" fill="#cfcfcf" />
      <path d="M8 18L18 8L26 12L32 1L48 10L58 2L66 8L74 6L90 20L86 30H12Z" fill="#e8e8e6" />
      <path d="M14 14L28 24L22 30ZM26 6L36 12L30 28ZM40 12L46 28L38 26ZM66 10L70 28L60 24ZM80 14L84 26L76 28ZM50 8L56 14L50 20Z" fill="#6d6660" />
      <path d="M36 14l8 6l-4 6ZM52 16l4 8l-8 2Z" fill="#3fa3a0" />
      <path d="M60 16l8 2l-2 8Z" fill="#b86a3c" />
      <path d="M1 20Q49 38 97 20L84 122Q80 130 49 130Q18 130 14 122Z" fill="url(#tr)" opacity="0.960" />
      <path d="M1 20Q49 38 97 20" fill="none" stroke="#fafafa" strokeWidth="2" />
      <path d="M30 40L38 110M60 36L50 90M72 50L64 120" stroke="#cbc9c7" strokeWidth="3" opacity="0.500" />
    </svg>
  );
}

function DockApp({ children, open }: { children: ReactNode; open?: boolean }) {
  return (
    <div className="flex h-full w-[145.800px] shrink-0 flex-col items-center">
      <div className="flex h-[156px] items-center justify-center">{children}</div>
      {open && <div className="size-2 rounded-full bg-[#3c1c10]/75" />}
    </div>
  );
}

function Dock() {
  return (
    <div className="absolute left-[129px] top-[1622px] flex h-[168px] w-[2622px] items-start overflow-hidden rounded-[50px] bg-[radial-gradient(ellipse_60%_60%_at_50%_100%,rgba(240,185,160,0.800),rgba(240,190,160,0)),linear-gradient(90deg,#7199d2_0%,#76a2da_10%,#a9a2ab_15%,#e0955f_18.500%,#ef9f6a_22.500%,#e6c3a0_27%,#e4d0c0_34%,#e2d6d0_50%,#e6dcd6_75%,#ecd3c0_88%,#f5a474_91.500%,#f7935a_95%,#f28e55_100%)] pl-[5px] shadow-[inset_0_0_0_2px_rgba(255,255,255,0.250)]">
      <DockApp open>
        <Finder />
      </DockApp>
      <DockApp>
        <Launchpad />
      </DockApp>
      <div className="flex w-[66px] shrink-0 justify-center pt-[22px]">
        <div className="h-[124px] w-[2px] bg-[#5f6c86]" />
      </div>
      <DockApp open>
        <Brave />
      </DockApp>
      <DockApp open>
        <div className="flex size-[111px] items-center justify-center rounded-[27px] bg-[#fdfbfa] shadow-lg">
          <ChromeDisc className="size-[98px]" />
        </div>
      </DockApp>
      <DockApp open>
        <VsCode />
      </DockApp>
      <DockApp open>
        <GearTile className="-mt-[6px] h-[122px] w-[126px] drop-shadow-lg" />
      </DockApp>
      <DockApp open>
        <TerminalIcon />
      </DockApp>
      <DockApp open>
        <SafariIcon />
      </DockApp>
      <DockApp open>
        <MysqlIcon />
      </DockApp>
      <DockApp open>
        <XcodeIcon />
      </DockApp>
      <DockApp open>
        <GithubTile className="size-[111px] rounded-[27px] shadow-lg" />
      </DockApp>
      <div className="flex w-[69px] shrink-0 justify-center pt-[22px]">
        <div className="h-[124px] w-[2px] bg-[#a3918a]" />
      </div>
      <div className="relative ml-[5px] mt-[33px] shrink-0">
        <MiniControl />
        <GearTile className="absolute -bottom-[17px] right-0 size-[47px]" />
      </div>
      <div className="ml-[13px] mt-[49px] flex shrink-0 flex-col items-end">
        <MiniShell filled />
        <span className="mt-[8px] flex h-[30px] w-[120px] items-center justify-center rounded-full bg-[#a58d80] text-[25px] tracking-[-0.800px] text-white [text-shadow:0_2px_3px_rgba(0,0,0,0.600)]">Python...</span>
      </div>
      <div className="ml-[8px] mt-[39px] shrink-0">
        <MiniShell />
      </div>
      <div className="relative ml-[12px] mt-[34px] shrink-0">
        <MiniGit />
        <GithubTile className="absolute -bottom-[18px] right-[3px] size-[42px] rounded-[10px]" />
      </div>
      <div className="relative ml-[16px] mt-[39px] shrink-0">
        <MiniTube />
        <div className="absolute -bottom-[22px] right-[2px] flex size-[42px] items-center justify-center rounded-[10px] bg-[#fbf6f2]">
          <ChromeDisc className="size-[38px]" />
        </div>
      </div>
      <div className="ml-[32px] mt-[12px] shrink-0">
        <Trash />
      </div>
    </div>
  );
}

export default function App() {
  return (
    <div className="relative h-[1800px] w-[2880px] overflow-hidden font-['Inter',sans-serif]">
      <Wallpaper />
      <LowerWindows />
      <BackWindow />
      <CodeWindow />
      <Browser />
      <Dock />
      <MenuBar />
    </div>
  );
}
